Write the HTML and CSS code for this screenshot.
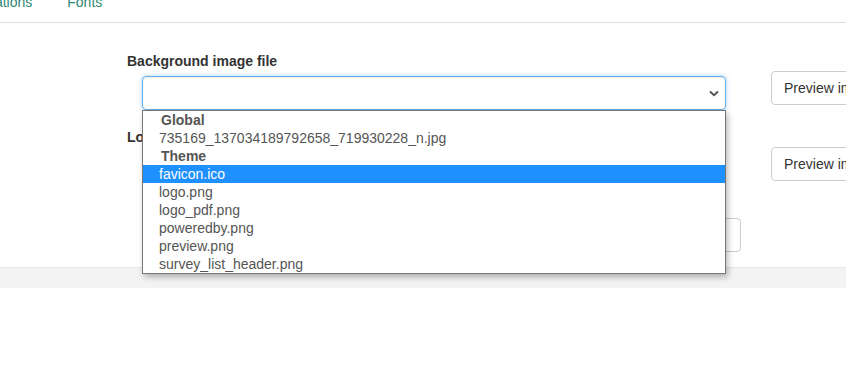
FILE: index.html
```html
<!DOCTYPE html>
<html lang="en">
<head>
    <meta charset="UTF-8">
    <meta name="viewport" content="width=device-width, initial-scale=1.0">
    <title>Theme options - Images</title>
    <link rel="stylesheet" href="styles.css">
</head>
<body>
    <ul class="nav-tabs">
        <li><a href="#">Animations</a></li>
        <li><a href="#">Fonts</a></li>
    </ul>

    <div class="panel">
        <div class="form-row">
            <div class="field">
                <label class="field-label">Background image file</label>
                <div class="select-wrap">
                    <div class="select focused">
                        <span class="select-value"></span>
                        <svg class="chevron" width="10" height="7" viewBox="0 0 10 7">
                            <path d="M1 1.5 L5 5.2 L9 1.5" fill="none" stroke="#555" stroke-width="2"/>
                        </svg>
                    </div>
                    <ul class="dropdown">
                        <li class="group">Global</li>
                        <li class="option">735169_137034189792658_719930228_n.jpg</li>
                        <li class="group">Theme</li>
                        <li class="option selected">favicon.ico</li>
                        <li class="option">logo.png</li>
                        <li class="option">logo_pdf.png</li>
                        <li class="option">poweredby.png</li>
                        <li class="option">preview.png</li>
                        <li class="option">survey_list_header.png</li>
                    </ul>
                </div>
            </div>
            <button class="btn">Preview image</button>
        </div>

        <div class="form-row">
            <div class="field">
                <label class="field-label">Logo file</label>
                <div class="select-wrap">
                    <div class="select">
                        <span class="select-value">logo.png</span>
                    </div>
                </div>
            </div>
            <button class="btn">Preview image</button>
        </div>

        <div class="upload-row">
            <button class="btn upload">Upload an image</button>
        </div>
    </div>

    <div class="footer"></div>
</body>
</html>
```

FILE: styles.css
```css
html, body {
    overflow: hidden;
}
body {
    margin: 0;
    font-family: "Liberation Sans", Arial, sans-serif;
    font-size: 14px;
    line-height: 20px;
    color: #333;
    background-color: #fff;
}
.nav-tabs {
    display: flex;
    list-style: none;
    margin: -18px 0 0 -54px;
    padding: 0;
    border-bottom: 1px solid #ddd;
}
.nav-tabs a {
    display: block;
    padding: 10px 17px;
    margin-right: 1px;
    color: #2b8872;
    text-decoration: none;
}
.panel {
    padding: 28px 0 15px 127px;
}
.form-row {
    display: grid;
    grid-template-columns: 599px auto;
    column-gap: 45px;
    margin-bottom: 17px;
}
.field-label {
    display: block;
    font-weight: bold;
    margin-bottom: 5px;
}
.select-wrap {
    position: relative;
    margin-left: 15px;
}
.select {
    height: 34px;
    box-sizing: border-box;
    border: 1px solid #ccc;
    border-radius: 4px;
    display: flex;
    align-items: center;
    justify-content: space-between;
    padding: 0 6px 0 12px;
    color: #555;
}
.select.focused {
    border-color: #66afe9;
    box-shadow: inset 0 1px 1px rgba(0,0,0,0.075), 0 0 4px rgba(102,175,233,0.6);
}
.chevron {
    margin-top: 1px;
}
.dropdown {
    position: absolute;
    top: 34px;
    left: 0;
    width: 584px;
    box-sizing: border-box;
    list-style: none;
    margin: 0;
    padding: 0;
    background-color: #fff;
    border: 1px solid #767676;
    box-shadow: 2px 3px 6px rgba(0,0,0,0.28);
    z-index: 10;
}
.dropdown li {
    height: 18px;
    line-height: 18px;
    color: #555;
    white-space: nowrap;
}
.dropdown .group {
    font-weight: bold;
    padding-left: 18px;
}
.dropdown .option {
    padding-left: 16px;
}
.dropdown .selected {
    background-color: #1e90ff;
    color: #fff;
}
.btn {
    height: 34px;
    margin-top: 20px;
    padding: 6px 12px;
    font-family: inherit;
    font-size: 14px;
    line-height: 20px;
    color: #333;
    background-color: #fff;
    border: 1px solid #ccc;
    border-radius: 4px;
    white-space: nowrap;
    justify-self: start;
}
.upload-row {
    display: flex;
    justify-content: flex-end;
    width: 614px;
    margin-top: 32px;
}
.upload-row .btn {
    margin-top: 0;
    width: 140px;
}
.footer {
    height: 20px;
    border-top: 1px solid #e6e6e6;
    background-color: #f3f3f3;
}
```
